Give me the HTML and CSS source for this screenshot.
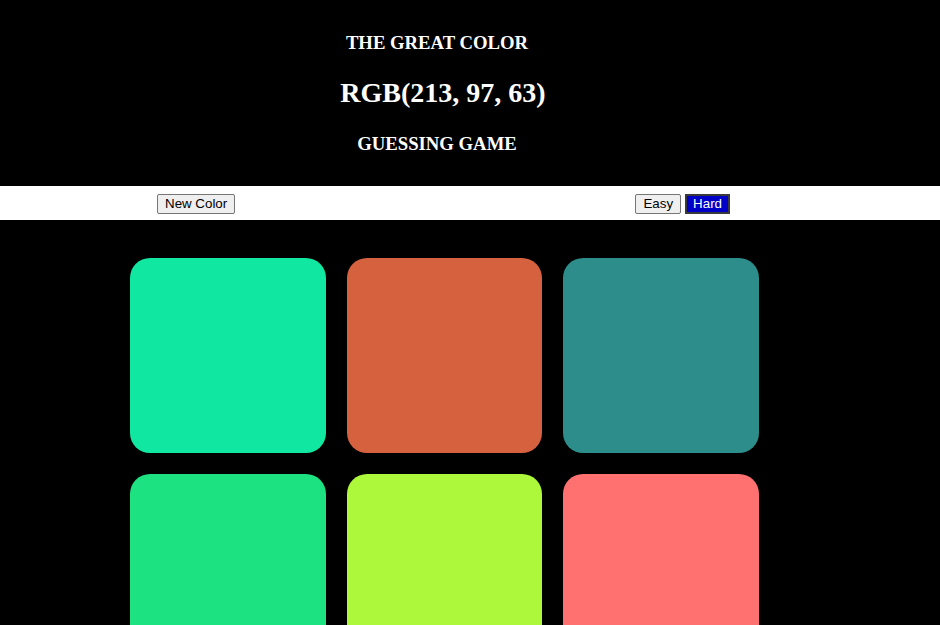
FILE: index.html
```html
<!DOCTYPE html>
<html>
<head>
<meta charset="utf-8">
<title>Color Game</title>
<link rel="stylesheet" href="styles.css">
</head>
<body>
<header class="header">
  <h3 class="title-small">THE GREAT COLOR</h3>
  <h1 class="title-rgb">RGB(213, 97, 63)</h1>
  <h3 class="title-small title-last">GUESSING GAME</h3>
</header>
<div class="bar">
  <button class="btn">New Color</button>
  <div class="modes">
    <button class="btn">Easy</button>
    <button class="btn btn-selected">Hard</button>
  </div>
</div>
<main class="board">
  <div class="square sq1"></div>
  <div class="square sq2"></div>
  <div class="square sq3"></div>
  <div class="square sq4"></div>
  <div class="square sq5"></div>
  <div class="square sq6"></div>
</main>
</body>
</html>
```
FILE: styles.css
```css
html, body {
  margin: 0;
  padding: 0;
  background: #000;
}
body {
  font-family: "Liberation Serif", "Times New Roman", serif;
  overflow: hidden;
}
.header {
  height: 186px;
  box-sizing: border-box;
  padding: 32px 66px 0 0;
  color: #fff;
  text-align: center;
}
.title-small {
  margin: 0;
  font-size: 18.72px;
  line-height: 21.5px;
  font-weight: bold;
}
.title-rgb {
  margin: 23px 0 24px;
  padding-left: 12px;
  font-size: 28px;
  line-height: 32px;
  font-weight: bold;
}
.bar {
  background: #fff;
  height: 34px;
  display: flex;
  align-items: center;
  justify-content: space-between;
  padding: 1px 210px 0 157px;
  box-sizing: border-box;
}
.modes {
  display: flex;
  gap: 4px;
}
.btn {
  font-family: "Liberation Sans", Arial, sans-serif;
  font-size: 13.333px;
  height: 20px;
  padding: 0 7px;
  margin: 0;
  background: #efefef;
  color: #000;
  border: 1px solid #767676;
  border-radius: 2px;
  line-height: 16px;
}
.btn-selected {
  background: #0000c8;
  color: #fff;
  border: 2px solid #3a3a3a;
  border-radius: 0;
  padding: 0 6px;
}
.board {
  display: grid;
  grid-template-columns: repeat(3, 195.5px);
  grid-auto-rows: 195px;
  column-gap: 21px;
  row-gap: 21px;
  padding: 38px 0 0 130px;
}
.square {
  border-radius: 20px;
}
.sq1 { background: rgb(16, 232, 161); }
.sq2 { background: rgb(213, 97, 63); }
.sq3 { background: rgb(44, 141, 138); }
.sq4 { background: rgb(29, 226, 129); }
.sq5 { background: rgb(173, 248, 59); }
.sq6 { background: rgb(255, 112, 113); }
```
